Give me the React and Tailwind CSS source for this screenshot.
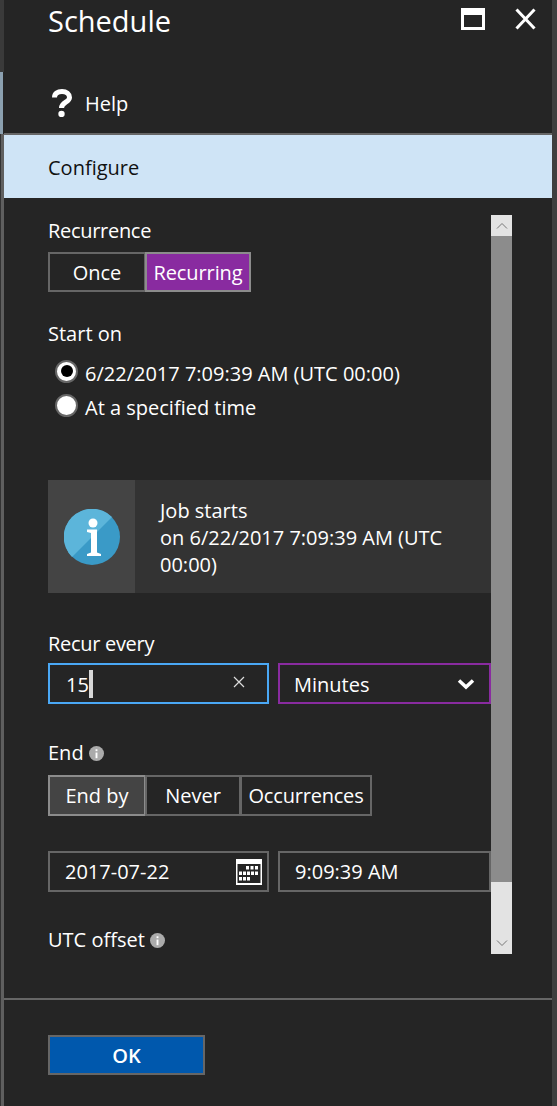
import React from 'react';

function Radio({ checked, label }) {
  return (
    <div className="flex items-center h-[34px]">
      <span className="w-[23px] h-[23px] ml-[7px] rounded-full border-[2px] border-[#666666] bg-white flex items-center justify-center -mt-[6px] shrink-0">
        {checked && <span className="w-[12px] h-[12px] rounded-full bg-black" />}
      </span>
      <span className="ml-[7px] text-white">{label}</span>
    </div>
  );
}

function InfoDot() {
  return (
    <svg width="15" height="15" viewBox="0 0 16 16" className="ml-[5px]">
      <circle cx="8" cy="8" r="8" fill="#ababab" />
      <rect x="7" y="7" width="2" height="6" fill="#fff" />
      <rect x="7" y="3.5" width="2" height="2" fill="#fff" />
    </svg>
  );
}

function CalendarIcon() {
  return (
    <svg width="26" height="26" viewBox="0 0 26 26">
      <rect width="26" height="26" fill="#fff" />
      <rect x="1.5" y="5" width="23" height="19" fill="#252525" />
      <g fill="#fff">
        <rect x="10" y="7" width="3" height="3.5" /><rect x="14.5" y="7" width="3" height="3.5" /><rect x="19" y="7" width="3" height="3.5" />
        <rect x="3" y="12.5" width="3" height="3.5" /><rect x="7" y="12.5" width="3" height="3.5" /><rect x="11" y="12.5" width="3" height="3.5" /><rect x="15" y="12.5" width="3" height="3.5" /><rect x="19" y="12.5" width="3" height="3.5" />
        <rect x="3" y="18" width="3" height="3.5" /><rect x="7" y="18" width="3" height="3.5" /><rect x="11" y="18" width="3" height="3.5" />
      </g>
    </svg>
  );
}

export default function App() {
  return (
    <div className="w-[557px] h-[1106px] bg-[#252525] text-white flex overflow-hidden text-[20px] leading-[28px] font-['Open_Sans','Noto_Sans',sans-serif]">
      {/* Left edge */}
      <div className="w-[4px] flex flex-col shrink-0">
        <div className="h-[72px] bg-[#3a3a3a]" />
        <div className="h-[62px] border-r-[1px] border-[#252525] bg-[#8ba0b0]" />
        <div className="flex-1 border-l-[1px] border-[#333333] bg-[#5f5f5f]" />
      </div>

      <div className="flex-1 flex flex-col min-w-0">
        {/* Header */}
        <div className="h-[72px] flex items-start pl-[44px] pr-[16px] pt-[1px]">
          <span className="text-[29px] leading-[40px] flex-1">Schedule</span>
          <svg width="24" height="22" viewBox="0 0 24 22" className="mt-[7px]">
            <path d="M1.5 1.5H22.5V20.5H1.5Z" fill="none" stroke="#fff" strokeWidth="3" />
            <rect x="2" y="2" width="20" height="5" fill="#fff" />
          </svg>
          <svg width="21" height="22" viewBox="0 0 21 22" className="ml-[30px] mt-[7px]">
            <path d="M1.5 1.5L19.5 20.5M19.5 1.5L1.5 20.5" stroke="#fff" strokeWidth="3" />
          </svg>
        </div>

        {/* Help */}
        <div className="h-[61px] flex items-center pl-[48px]">
          <svg width="20" height="28" viewBox="0 0 20 28">
            <path d="M2.5 8.5C2.5 4.5 5.5 2.5 10 2.5C14.5 2.5 17.5 5 17.5 8.5C17.5 13.5 9.5 13 9.5 19" fill="none" stroke="#fff" strokeWidth="5" />
            <circle cx="9.5" cy="25" r="3.2" fill="#fff" />
          </svg>
          <span className="ml-[13px] pt-[2px]">Help</span>
        </div>

        {/* Configure tab */}
        <div className="border-t-[2px] border-[#666666] h-[65px]">
          <div className="h-[63px] bg-[#cfe4f6] text-[#111111] flex items-center pl-[44px] pt-[2px]">Configure</div>
        </div>

        {/* Scrolling form */}
        <div className="h-[800px] flex items-start">
          <div className="w-[487px] pl-[44px] pt-[19px] shrink-0">
            <div className="h-[35px] tracking-[-0.3px]">Recurrence</div>
            <div className="flex h-[40px] w-fit">
              <div className="w-[98px] pt-[2px] border-[2px] border-[#666666] flex items-center justify-center">Once</div>
              <div className="w-[106px] pt-[2px] -ml-[1px] border-[2px] border-[#8c8c8c] bg-[#892ba0] flex items-center justify-center tracking-[-0.1px]">Recurring</div>
            </div>

            <div className="mt-[28px] h-[28px]">Start on</div>
            <div className="mt-[9px]">
              <Radio checked label="6/22/2017 7:09:39 AM (UTC 00:00)" />
              <Radio label="At a specified time" />
            </div>

            <div className="mt-[55px] h-[113px] flex bg-[#333333]">
              <div className="w-[87px] bg-[#444444] flex items-center justify-center shrink-0">
                <svg width="56" height="56" viewBox="0 0 56 56">
                  <circle cx="28" cy="28" r="28" fill="#3a9ac7" />
                  <path d="M8 48A28 28 0 0 1 48 8Z" fill="#5cb5da" />
                  <circle cx="29" cy="14" r="4.5" fill="#fff" />
                  <path d="M23 20.5H33V43.5L37 45V47H23V45L27 43.5V24L23 23Z" fill="#fff" />
                </svg>
              </div>
              <div className="pl-[25px] pt-[17px] pr-[8px] leading-[27px]">
                Job starts<br />on 6/22/2017 7:09:39 AM (UTC 00:00)
              </div>
            </div>

            <div className="mt-[37px] h-[28px] tracking-[-0.3px]">Recur every</div>
            <div className="mt-[5px] flex h-[41px]">
              <div className="w-[221px] border-[2px] border-[#4aa8f5] flex items-center pl-[16px] pr-[22px]">
                <span className="pt-[2px]">15</span>
                <span className="w-[4px] h-[28px] bg-[#d8d8d8]" />
                <svg width="12" height="12" viewBox="0 0 12 12" className="ml-auto -mt-[4px]">
                  <path d="M1 1L11 11M11 1L1 11" stroke="#dddddd" strokeWidth="1.2" />
                </svg>
              </div>
              <div className="w-[213px] ml-[9px] border-[2px] border-[#892ba0] flex items-center pl-[14px] pr-[14px] justify-between">
                <span className="pt-[2px]">Minutes</span>
                <svg width="18" height="12" viewBox="0 0 18 12">
                  <path d="M2 2.5L9 9L16 2.5" fill="none" stroke="#fff" strokeWidth="3.5" />
                </svg>
              </div>
            </div>

            <div className="mt-[35px] h-[28px] flex items-center">End<InfoDot /></div>
            <div className="mt-[8px] flex h-[41px] w-fit">
              <div className="w-[98px] border-[2px] border-[#8c8c8c] bg-[#444444] flex items-center justify-center">End by</div>
              <div className="w-[96px] -ml-[1px] border-[2px] border-[#666666] flex items-center justify-center">Never</div>
              <div className="w-[132px] -ml-[1px] border-[2px] border-[#666666] flex items-center justify-center tracking-[-0.2px]">Occurrences</div>
            </div>

            <div className="mt-[35px] flex h-[41px]">
              <div className="w-[221px] border-[2px] border-[#666666] flex items-center pl-[15px] pr-[5px] justify-between">
                <span>2017-07-22</span>
                <CalendarIcon />
              </div>
              <div className="w-[213px] ml-[9px] border-[2px] border-[#666666] flex items-center pl-[15px]">9:09:39 AM</div>
            </div>

            <div className="mt-[34px] h-[28px] flex items-center">UTC offset<InfoDot /></div>
          </div>

          {/* Scrollbar */}
          <div className="w-[21px] h-[739px] mt-[17px] flex flex-col shrink-0">
            <div className="h-[21px] bg-[#e3e3e3] flex items-center justify-center">
              <svg width="12" height="8" viewBox="0 0 12 8"><path d="M1 6.5L6 1.5L11 6.5" fill="none" stroke="#777777" /></svg>
            </div>
            <div className="h-[646px] bg-[#8c8c8c]" />
            <div className="flex-1 bg-[#e3e3e3] flex items-end justify-center pb-[7px]">
              <svg width="12" height="8" viewBox="0 0 12 8"><path d="M1 1.5L6 6.5L11 1.5" fill="none" stroke="#777777" /></svg>
            </div>
          </div>
        </div>

        {/* Footer */}
        <div className="flex-1 border-t-[2px] border-[#666666] pl-[44px] pt-[35px]">
          <div className="w-[157px] h-[40px] pt-[2px] bg-[#0058ad] border-[2px] border-[#666666] flex items-center justify-center font-semibold">OK</div>
        </div>
      </div>

      {/* Right edge */}
      <div className="w-[5px] bg-[#3f3f3f] shrink-0" />
    </div>
  );
}
